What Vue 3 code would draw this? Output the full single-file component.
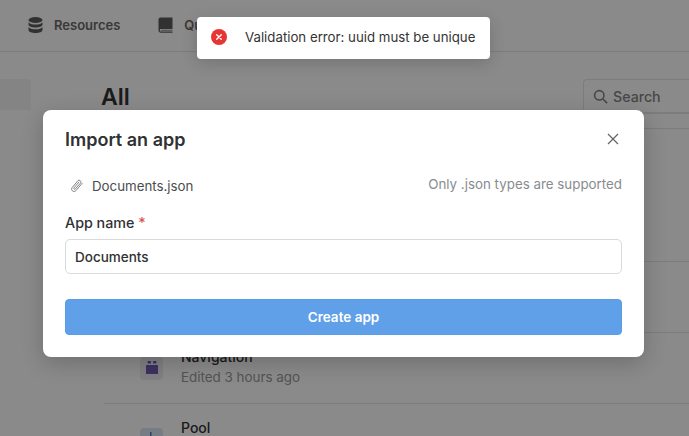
<script setup>
const rows = [
  { name: 'Navigation', sub: 'Edited 3 hours ago', tint: '#ecebf3', fg: '#6f5bb5', kind: 'nav' },
  { name: 'Pool', sub: '', tint: '#dce8f5', fg: '#4a80c0', kind: 'pool' },
]
</script>

<template>
  <div class="page">
    <header class="topbar">
      <div class="nav-item">
        <svg class="nav-icon" viewBox="0 0 15 16" width="15" height="16" fill="#5c5c5c">
          <ellipse cx="7.5" cy="3" rx="7" ry="3" />
          <path d="M.5 5.2v2.6c0 1.6 3.1 2.8 7 2.8s7-1.2 7-2.8V5.2c-1 1.5-3.8 2.3-7 2.3S1.500 6.700.5 5.200z" />
          <path d="M.5 10v3c0 1.700 3.100 3 7 3s7-1.300 7-3v-3c-1 1.500-3.800 2.300-7 2.300S1.500 11.500.5 10z" />
        </svg>
        <span>Resources</span>
      </div>
      <div class="nav-item">
        <svg class="nav-icon" viewBox="0 0 15 16" width="15" height="16">
          <path d="M2.500 .5H14.500V12H3.200C2.300 12 1.800 12.500 1.800 13.300S2.300 14.600 3.200 14.600H14.500V15.800H3C1.500 15.800.5 14.700.5 13.300V2.500C.5 1.400 1.400.5 2.500.5z" fill="#5c5c5c" />
          <path d="M3 12.700H14.500V14H3z" fill="#a6a6a6" />
        </svg>
        <span>Queries</span>
      </div>
    </header>

    <div class="content">
      <aside class="sidebar"><div class="side-active"></div></aside>
      <main class="main">
        <div class="main-head">
          <h1>All</h1>
          <div class="search">
            <svg viewBox="0 0 16 16" width="15" height="15" fill="none" stroke="#858585" stroke-width="1.700">
              <circle cx="6.700" cy="6.700" r="5" />
              <path d="M10.400 10.400 15 15" />
            </svg>
            <span>Search</span>
          </div>
        </div>
        <div class="list">
          <div class="row row-tall"></div>
          <div class="row"></div>
          <div v-for="r in rows" :key="r.name" class="row">
            <div class="row-icon" :style="{ background: r.tint }">
              <svg v-if="r.kind === 'nav'" viewBox="0 0 14 14" width="14" height="14">
                <rect x="2.500" y="0" width="3.500" height="2.500" rx=".8" :fill="r.fg" />
                <rect x="8" y="0" width="3.500" height="2.500" rx=".8" :fill="r.fg" />
                <rect x="1" y="4" width="12" height="9" rx=".5" :fill="r.fg" />
              </svg>
              <svg v-else viewBox="0 0 14 14" width="14" height="14">
                <rect x="5" y="0" width="1.500" height="4" :fill="r.fg" />
              </svg>
            </div>
            <div class="row-text">
              <div class="row-name">{{ r.name }}</div>
              <div v-if="r.sub" class="row-sub">{{ r.sub }}</div>
              <div v-else class="row-sub-gap"></div>
            </div>
          </div>
        </div>
      </main>
    </div>

    <div class="overlay"></div>

    <div class="toast">
      <svg viewBox="0 0 16 16" width="16" height="16">
        <circle cx="8" cy="8" r="8" fill="#e53535" />
        <path d="M5.700 5.700l4.600 4.600M10.300 5.700l-4.600 4.600" stroke="#fff" stroke-width="1.300" stroke-linecap="round" />
      </svg>
      <span>Validation error: uuid must be unique</span>
    </div>

    <section class="modal">
      <div class="modal-head">
        <h2>Import an app</h2>
        <svg viewBox="0 0 12 12" width="12" height="12" fill="none" stroke="#666" stroke-width="1.300">
          <path d="M1 1l10 10M11 1 1 11" />
        </svg>
      </div>
      <div class="file-row">
        <div class="file">
          <svg viewBox="0 0 16 16" width="14" height="14" fill="none" stroke="#808080" stroke-width="1.100" stroke-linecap="round" stroke-linejoin="round">
            <path d="M14 4.800 6.800 13.300a2.800 2.800 0 0 1-4.300-3.600l6.600-7.800a2 2 0 0 1 3 2.600L6 11.500a1 1 0 0 1-1.500-1.300l5.600-6.600" />
          </svg>
          <span>Documents.json</span>
        </div>
        <span class="hint">Only .json types are supported</span>
      </div>
      <label class="label">App name <em>*</em></label>
      <div class="input">Documents</div>
      <button class="submit">Create app</button>
    </section>
  </div>
</template>

<style>
html, body { margin: 0; background: #fff; overflow: hidden; }
</style>

<style scoped>
.page {
  position: relative;
  width: 689px;
  height: 436px;
  overflow: hidden;
  background: #fff;
  font-family: Inter, "Liberation Sans", sans-serif;
  color: #333;
}
.topbar {
  height: 52px;
  box-sizing: border-box;
  border-bottom: 1px solid #e6e6e6;
  display: flex;
  align-items: center;
  gap: 38px;
  padding: 0 0 2px 28px;
}
.nav-item {
  display: flex;
  align-items: center;
  gap: 11px;
  font-size: 13px;
  font-weight: 600;
  color: #6a6a6a;
}
.content { display: flex; }
.sidebar { width: 100px; padding-top: 27px; }
.side-active { width: 31px; height: 31px; border-radius: 0 3px 3px 0; background: #f4f4f4; }
.main { flex: 1; min-width: 0; }
.main-head {
  display: flex;
  justify-content: space-between;
  align-items: flex-start;
  height: 77px;
  box-sizing: border-box;
  border-bottom: 1px solid #e6e6e6;
  margin-left: 4px;
  padding-top: 27px;
}
h1 {
  margin: 4px 0 0 -3px;
  font-size: 23px;
  line-height: 28px;
  font-weight: 600;
  color: #333;
}
.search {
  width: 106px;
  height: 35px;
  box-sizing: border-box;
  border: 1px solid #e6e6e6;
  border-bottom-width: 2px;
  border-right: 0;
  border-radius: 4px 0 0 4px;
  display: flex;
  align-items: center;
  gap: 5px;
  padding-left: 9px;
  font-size: 14.200px;
  font-weight: 500;
  color: #858585;
}
.list { margin-left: 4px; }
.row {
  height: 71px;
  box-sizing: border-box;
  border-bottom: 1px solid #e6e6e6;
  display: flex;
  align-items: center;
  gap: 18px;
  padding: 0 0 2px 36px;
}
.row-tall { height: 133px; }
.row-icon {
  width: 23px;
  height: 23px;
  border-radius: 4px;
  display: flex;
  align-items: center;
  justify-content: center;
  margin-top: 2px;
}
.row-name { font-size: 14px; line-height: 20px; font-weight: 500; }
.row-sub { font-size: 13.400px; line-height: 20px; color: #9a9a9a; }
.row-sub-gap { height: 20px; }
.overlay { position: absolute; inset: 0; background: rgba(0, 0, 0, 0.46); }
.toast {
  position: absolute;
  left: 197px;
  top: 17px;
  width: 293px;
  height: 42px;
  box-sizing: border-box;
  border-radius: 4px;
  background: #fff;
  box-shadow: 0 4px 16px rgba(0, 0, 0, 0.16);
  display: flex;
  align-items: center;
  gap: 18px;
  padding: 0 0 2px 14px;
  font-size: 13.250px;
  color: #333;
}
.modal {
  position: absolute;
  left: 43px;
  top: 110px;
  width: 601px;
  height: 247px;
  box-sizing: border-box;
  padding: 17px 22px 0;
  border-radius: 8px;
  background: #fff;
  box-shadow: 0 6px 22px rgba(0, 0, 0, 0.2);
}
.modal-head {
  display: flex;
  justify-content: space-between;
  align-items: center;
  height: 24px;
}
h2 { margin: 0; font-size: 18px; font-weight: 600; color: #2f3133; }
.modal-head svg { margin-right: 3px; }
.file-row {
  display: flex;
  justify-content: space-between;
  align-items: center;
  margin-top: 24px;
  height: 22px;
}
.file { display: flex; align-items: center; gap: 8px; padding-left: 5px; font-size: 13.300px; color: #4a4d50; }
.hint { font-size: 13.350px; color: #888c90; position: relative; top: -2px; }
.label { display: block; margin-top: 15px; font-size: 14.300px; line-height: 22px; font-weight: 500; color: #2f3133; }
.label em { font-style: normal; color: #d9534f; }
.input {
  margin-top: 5px;
  height: 35px;
  box-sizing: border-box;
  border: 1px solid #d8dadc;
  border-radius: 5px;
  padding-left: 9px;
  display: flex;
  align-items: center;
  font-size: 13.500px;
  font-weight: 500;
  color: #2f3133;
}
.submit {
  display: block;
  width: 100%;
  height: 36px;
  margin-top: 25px;
  border: 1px solid #5a9de6;
  border-radius: 4px;
  background: #5fa0e8;
  color: #fff;
  font: 600 13.500px Inter, "Liberation Sans", sans-serif;
}
</style>
